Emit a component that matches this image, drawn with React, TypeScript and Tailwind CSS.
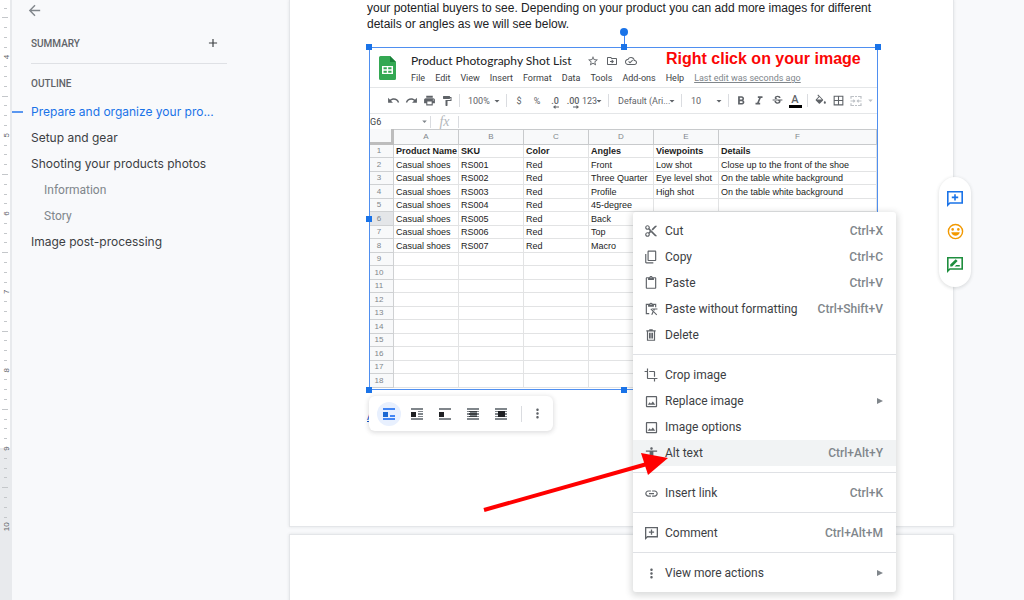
import type { ReactNode } from "react";
import {
  MdAccessibility,
  MdAdd,
  MdArrowBack,
  MdArrowDropDown,
  MdBorderAll,
  MdContentCopy,
  MdContentCut,
  MdCrop,
  MdFormatBold,
  MdFormatItalic,
  MdFormatPaint,
  MdLink,
  MdMoreVert,
  MdOutlineCloudDone,
  MdOutlineContentPaste,
  MdOutlineDriveFileMove,
  MdOutlineImage,
  MdPrint,
  MdRedo,
  MdStarBorder,
  MdStrikethroughS,
  MdUndo,
} from "react-icons/md";

const INCH = 78.3;

const Ruler = () => {
  const ticks = Array.from({ length: 55 }, (_, i) => i - 6);
  return (
    <div className="w-3 shrink-0 border-r-2 border-[#e8eaed] bg-white">
      <svg width="10" height="600" className="block">
        <rect x="0" y="448" width="10" height="152" fill="#e8eaed" />
        {ticks.map((i) => {
          const y = 57 + (i * INCH) / 8;
          if (i % 8 === 0) {
            return (
              <text
                key={i}
                transform={`translate(9 ${y}) rotate(-90)`}
                textAnchor="middle"
                fontSize="8"
                fill="#5f6368"
                className="font-['Liberation_Sans',sans-serif]"
              >
                {4 + i / 8}
              </text>
            );
          }
          const half = Math.abs(i % 8) === 4;
          return (
            <rect
              key={i}
              x={half ? 2 : 4}
              y={Math.round(y - 0.5)}
              width={half ? 6 : 3}
              height="1"
              fill="#c4c7ca"
            />
          );
        })}
      </svg>
    </div>
  );
};

const outline = [
  { text: "Prepare and organize your pro...", active: true },
  { text: "Setup and gear" },
  { text: "Shooting your products photos" },
  { text: "Information", sub: true },
  { text: "Story", sub: true },
  { text: "Image post-processing" },
];

const Sidebar = () => (
  <nav className="w-[277px] shrink-0">
    <button aria-label="Close outline" className="ml-[14px] mt-[2px] block text-[#80868b]">
      <MdArrowBack size={17} />
    </button>
    <div className="ml-[19px] mr-[62px]">
      <div className="mt-[14px] flex h-5 items-center justify-between">
        <h2 className="text-[10px] font-medium text-[#5f6368]">SUMMARY</h2>
        <button aria-label="Add summary" className="mr-[7px] text-[#3c4043]">
          <MdAdd size={14} />
        </button>
      </div>
      <hr className="mt-[10px] border-[#dfe1e5]" />
      <h2 className="mt-[12px] text-[10px] font-medium leading-4 text-[#5f6368]">
        OUTLINE
      </h2>
    </div>
    <ul className="mt-[7px]">
      {outline.map((item) => (
        <li key={item.text} className="flex h-[26px] items-center">
          <span
            className={
              item.active ? "mr-2 h-[2px] w-[11px] bg-[#5a97f0]" : "mr-2 w-[11px]"
            }
          />
          <a
            href="#"
            className={
              item.active
                ? "font-[Inter,sans-serif] text-[12px] text-[#1a73e8]"
                : item.sub
                  ? "pl-[13px] text-[12px] text-[#80868b]"
                  : "font-[Inter,sans-serif] text-[12px] text-[#3c4043]"
            }
          >
            {item.text}
          </a>
        </li>
      ))}
    </ul>
  </nav>
);

/* ---- Sheet inside the document ---- */

const SheetsLogo = () => (
  <svg width="17" height="24" viewBox="0 0 17 24">
    <path d="M1.500 0H11l6 6v16.500a1.500 1.500 0 0 1-1.500 1.500h-14A1.500 1.500 0 0 1 0 22.500v-21A1.500 1.500 0 0 1 1.500 0z" fill="#34a853" />
    <path d="M11 0l6 6h-6z" fill="#188038" />
    <path d="M3 10h11v8H3zM4.500 11.200v2.100h3.300v-2.100zm4.700 0v2.100h3.300v-2.100zM4.500 14.700v2.100h3.300v-2.100zm4.700 0v2.100h3.300v-2.100z" fill="#fff" fillRule="evenodd" />
  </svg>
);

const FillIcon = () => (
  <svg width="13" height="13" viewBox="0 0 24 24" fill="#5f6368">
    <path d="M16.560 9.940L7.620 1 6.210 2.410l2.380 2.380-5.150 5.150a1.490 1.490 0 0 0 0 2.120l5.500 5.500c.290.290.680.440 1.060.440s.770-.150 1.060-.440l5.500-5.500c.590-.580.590-1.530 0-2.120zM5.500 10L10 5.500l4.500 4.500zM20 12.500s-2 2.200-2 3.500a2 2 0 0 0 4 0c0-1.300-2-3.500-2-3.500z" />
  </svg>
);

const MergeIcon = () => (
  <svg width="12" height="12" viewBox="0 0 12 12" fill="none" stroke="#bdc1c6" strokeWidth="1.200">
    <path d="M4 1.500H1v2.200M4 10.500H1V8.300M8 1.500h3v2.200M8 10.500h3V8.300M5 1.500h2M5 10.500h2M0.500 6h4M11.500 6h-4" />
    <path d="M3.300 4.800L4.600 6 3.300 7.200M8.700 4.800L7.400 6l1.300 1.200" />
  </svg>
);

const Sep = () => <span className="mx-[3px] h-[13px] w-px shrink-0 bg-[#dadce0]" />;

const Tool = ({ label, children }: { label: string; children: ReactNode }) => (
  <button
    aria-label={label}
    className="flex w-[18px] shrink-0 items-center justify-center text-[9px] text-[#5f6368]"
  >
    {children}
  </button>
);

const Picker = ({ label, value, box }: { label: string; value: string; box: string }) => (
  <label className={`relative flex shrink-0 items-center ${box}`}>
    <select
      aria-label={label}
      className="w-full appearance-none bg-transparent text-[9px] text-[#5f6368] outline-none"
    >
      <option>{value}</option>
    </select>
    <MdArrowDropDown size={12} className="pointer-events-none absolute right-0 text-[#5f6368]" />
  </label>
);

const DecimalIcon = ({ text, right }: { text: string; right?: boolean }) => (
  <span className="relative text-[9px] font-medium leading-3">
    {text}
    <svg width="6" height="4" viewBox="0 0 6 4" fill="#5f6368" className="absolute -bottom-[2px] right-0">
      {right ? <path d="M0 1.500h3.500V0L6 2 3.500 4V2.500H0z" /> : <path d="M6 1.500H2.500V0L0 2l2.500 2V2.500H6z" />}
    </svg>
  </span>
);

const menus = ["File", "Edit", "View", "Insert", "Format", "Data", "Tools", "Add-ons", "Help"];

const rows = [
  ["Product Name", "SKU", "Color", "Angles", "Viewpoints", "Details"],
  ["Casual shoes", "RS001", "Red", "Front", "Low shot", "Close up to the front of the shoe"],
  ["Casual shoes", "RS002", "Red", "Three Quarter", "Eye level shot", "On the table white background"],
  ["Casual shoes", "RS003", "Red", "Profile", "High shot", "On the table white background"],
  ["Casual shoes", "RS004", "Red", "45-degree", "", ""],
  ["Casual shoes", "RS005", "Red", "Back", "", ""],
  ["Casual shoes", "RS006", "Red", "Top", "", ""],
  ["Casual shoes", "RS007", "Red", "Macro", "", ""],
  ...Array.from({ length: 10 }, () => ["", "", "", "", "", ""]),
];

const Sheet = () => (
  <div className="h-[341px] overflow-hidden bg-white">
    <div className="flex h-10 items-start border-b border-[#e4e6e8] pl-[9px]">
      <div className="mt-2 w-8 shrink-0">
        <SheetsLogo />
      </div>
      <div className="min-w-0 flex-1">
        <div className="flex h-[22px] items-center pt-1 text-[#5f6368]">
          <h3 className="w-[176px] whitespace-nowrap font-[Lato,sans-serif] text-[12px] text-[#202124]">
            Product Photography Shot List
          </h3>
          <MdStarBorder size={12} />
          <MdOutlineDriveFileMove size={12} className="ml-[7px]" />
          <MdOutlineCloudDone size={12} className="ml-[7px]" />
          <strong className="ml-[29px] whitespace-nowrap pb-1 font-['Liberation_Sans',sans-serif] text-[16px] leading-4 text-[#fb0606]">
            Right click on your image
          </strong>
        </div>
        <div className="flex h-4 items-center gap-[10px] whitespace-nowrap text-[9px] text-[#3c4043]">
          {menus.map((m) => (
            <button key={m}>{m}</button>
          ))}
          <a href="#" className="text-[#80868b] underline">
            Last edit was seconds ago
          </a>
        </div>
      </div>
    </div>

    <div className="flex h-[26px] items-center border-b border-[#e4e6e8] pl-[14px]">
      <Tool label="Undo"><MdUndo size={13} /></Tool>
      <Tool label="Redo"><MdRedo size={13} /></Tool>
      <Tool label="Print"><MdPrint size={13} /></Tool>
      <Tool label="Paint format"><MdFormatPaint size={12} /></Tool>
      <Sep />
      <Picker label="Zoom" value="100%" box="w-10 pl-[5px]" />
      <Sep />
      <Tool label="Currency">$</Tool>
      <Tool label="Percent">%</Tool>
      <Tool label="Decrease decimals"><DecimalIcon text=".0" /></Tool>
      <Tool label="Increase decimals"><DecimalIcon text=".00" right /></Tool>
      <Picker label="Number format" value="123" box="w-[23px]" />
      <Sep />
      <Picker label="Font" value="Default (Ari..." box="w-[66px] pl-[6px]" />
      <Sep />
      <Picker label="Font size" value="10" box="w-10 pl-[6px]" />
      <Sep />
      <Tool label="Bold"><MdFormatBold size={14} /></Tool>
      <Tool label="Italic"><MdFormatItalic size={14} /></Tool>
      <Tool label="Strikethrough"><MdStrikethroughS size={13} /></Tool>
      <Tool label="Text color">
        <span className="w-[13px] border-b-[3px] border-black text-[11px] font-medium leading-[11px]">A</span>
      </Tool>
      <Sep />
      <Tool label="Fill color"><FillIcon /></Tool>
      <Tool label="Borders"><MdBorderAll size={13} /></Tool>
      <Tool label="Merge cells"><MergeIcon /></Tool>
      <MdArrowDropDown size={11} className="shrink-0 text-[#bdc1c6]" />
    </div>

    <div className="flex h-[15px] items-center text-[9px] text-[#3c4043]">
      <input aria-label="Cell" defaultValue="G6" className="w-[49px] bg-transparent outline-none" />
      <MdArrowDropDown size={11} className="text-[#80868b]" />
      <span className="h-3 w-px bg-[#dadce0]" />
      <span className="w-[27px] text-center font-['Liberation_Serif',serif] text-[14px] italic leading-3 text-[#b3b7bb]">
        fx
      </span>
      <span className="h-3 w-px bg-[#dadce0]" />
      <input aria-label="Formula" className="min-w-0 flex-1 bg-transparent outline-none" />
    </div>

    <table className="w-full table-fixed border-separate border-spacing-0 font-['Liberation_Sans',sans-serif] text-[9px] leading-3">
      <colgroup>
        <col className="w-6" />
        <col className="w-[65px]" />
        <col className="w-[65px]" />
        <col className="w-[65px]" />
        <col className="w-[65px]" />
        <col className="w-[65px]" />
        <col />
      </colgroup>
      <thead>
        <tr className="h-4 bg-[#f8f9fa] text-[8px] text-[#80868b]">
          <th className="border-b-[3px] border-r-[3px] border-[#bdbdbd]" />
          {["A", "B", "C", "D", "E", "F"].map((c) => (
            <th key={c} className="border-b border-r border-t border-[#c8cacc] p-0 font-normal">
              {c}
            </th>
          ))}
        </tr>
      </thead>
      <tbody>
        {rows.map((row, i) => (
          <tr key={i} className={i === 0 ? "h-[13px] font-bold" : "odd:h-[13px] even:h-[14px]"}>
            <th
              className={`border-b border-r border-[#cfd1d3] p-0 pr-[5px] align-bottom text-[8px] font-normal text-[#80868b] ${
                i === 5 ? "bg-[#e4e6e9]" : "bg-[#f8f9fa]"
              }`}
            >
              {i + 1}
            </th>
            {row.map((cell, j) => (
              <td
                key={j}
                className="whitespace-nowrap border-b border-r border-[#e2e3e4] p-0 pl-[2px] align-bottom text-[#1c1c1c]"
              >
                {cell}
              </td>
            ))}
          </tr>
        ))}
      </tbody>
    </table>
  </div>
);

const handles = [
  "-left-1 -top-1",
  "left-1/2 -ml-[3px] -top-1",
  "-right-1 -top-1",
  "-left-1 top-1/2 -mt-[3px]",
  "-right-1 top-1/2 -mt-[3px]",
  "-left-1 -bottom-1",
  "left-1/2 -ml-[3px] -bottom-1",
  "-right-1 -bottom-1",
];

/* ---- Wrap toolbar under the image ---- */

const WrapIcon = ({ kind }: { kind: string }) => (
  <svg width="12" height="12" viewBox="0 0 12 12" className="block">
    <g fill={kind === "Inline" ? "#4285f4" : "#80868b"}>
      <path d="M0 0h12v2H0zM0 10h12v2H0z" />
      {kind === "Inline" && <path d="M7 7h5v2H7z" />}
      {kind === "Wrap text" && <path d="M7 3h5v1H7zM7 5h5v2H7zM7 8h5v1H7z" />}
      {(kind === "Behind text" || kind === "In front of text") && (
        <path d="M0 3h12v1H0zM0 5h12v2H0zM0 8h12v1H0z" />
      )}
    </g>
    {kind === "Behind text" ? (
      <>
        <path d="M3 3h7v6H3z" fill="#80868b" />
        <path d="M2 3h8v1H2zM2 5h8v2H2zM2 8h8v1H2z" fill="#3c4043" />
      </>
    ) : kind === "In front of text" ? (
      <path d="M3 3h7v6H3z" fill="#202124" />
    ) : (
      <path d="M0 4h5v5H0z" fill={kind === "Inline" ? "#1967d2" : "#202124"} />
    )}
  </svg>
);

const WrapToolbar = () => (
  <div className="absolute -left-px top-full mt-[7px] flex h-[35px] w-[184px] items-center rounded-md bg-white pl-2 shadow-[0_1px_4px_1px_rgba(60,64,67,0.16)]">
    {["Inline", "Wrap text", "Break text", "Behind text", "In front of text"].map((kind) => (
      <button
        key={kind}
        aria-label={kind}
        className={`mr-1 flex size-6 items-center justify-center rounded-full ${
          kind === "Inline" ? "bg-[#e8f0fe]" : ""
        }`}
      >
        <WrapIcon kind={kind} />
      </button>
    ))}
    <span className="ml-1 h-4 w-px bg-[#dadce0]" />
    <button aria-label="More options" className="ml-2 text-[#5f6368]">
      <MdMoreVert size={15} />
    </button>
  </div>
);

/* ---- Context menu ---- */

const CommentIcon = ({ size }: { size: number }) => (
  <svg width={size} height={size} viewBox="2 2 20 20" fill="currentColor">
    <path d="M2 2h20v16H6l-4 4zM4 4v13.200L5.200 16H20V4z" fillRule="evenodd" />
    <path d="M11 6h2v3h3v2h-3v3h-2v-3H8V9h3z" />
  </svg>
);

const SuggestIcon = () => (
  <svg width="16" height="16" viewBox="2 2 20 20" fill="currentColor">
    <path d="M2 2h20v16H6l-4 4zM4 4v13.200L5.200 16H20V4z" fillRule="evenodd" />
    <path d="M6 14v-2.500l6.900-6.800 2.400 2.400L8.500 14zM11.500 14l2-2H18v2z" />
  </svg>
);

const EmojiIcon = () => (
  <svg width="17" height="17" viewBox="0 0 24 24" fill="currentColor">
    <path d="M12 1a11 11 0 1 0 0 22 11 11 0 0 0 0-22zm0 20a9 9 0 1 1 0-18 9 9 0 0 1 0 18z" />
    <circle cx="8" cy="9" r="1.800" />
    <circle cx="16" cy="9" r="1.800" />
    <path d="M6 13h12c-.6 3-3.100 5-6 5s-5.400-2-6-5z" />
  </svg>
);

const PastePlainIcon = () => (
  <svg width="14" height="14" viewBox="0 0 24 24" fill="currentColor">
    <path d="M19 3h-4.200a3 3 0 0 0-5.600 0H3v18h6v-2H5V5h2v3h10V5h2v4h2V3zm-7 2a1 1 0 1 1 0-2 1 1 0 0 1 0 2z" />
    <path d="M13 11h10v2h-4.500l-1 2.300-1.600-1.600.3-.7H15z" />
    <path d="M11 12.400l1.300-1.300L22.500 21.300l-1.300 1.300-4.900-4.900L14.500 22h-2.200l2.500-5.800z" />
  </svg>
);

const TrashIcon = () => (
  <svg width="14" height="14" viewBox="0 0 24 24" fill="currentColor">
    <path d="M9 2h6v2h5v2h-1v16H5V6H4V4h5zM7 6v14h10V6z" fillRule="evenodd" />
    <path d="M8.500 8h2v10h-2zM11 8h2v10h-2zM13.500 8h2v10h-2z" />
  </svg>
);

type Item = { icon: ReactNode; text: string; keys?: string; more?: boolean; hover?: boolean };

const groups: Item[][] = [
  [
    { icon: <MdContentCut size={14} />, text: "Cut", keys: "Ctrl+X" },
    { icon: <MdContentCopy size={14} className="-scale-x-100 rotate-180" />, text: "Copy", keys: "Ctrl+C" },
    { icon: <MdOutlineContentPaste size={14} />, text: "Paste", keys: "Ctrl+V" },
    { icon: <PastePlainIcon />, text: "Paste without formatting", keys: "Ctrl+Shift+V" },
    { icon: <TrashIcon />, text: "Delete" },
  ],
  [
    { icon: <MdCrop size={14} />, text: "Crop image" },
    { icon: <MdOutlineImage size={15} />, text: "Replace image", more: true },
    { icon: <MdOutlineImage size={15} />, text: "Image options" },
    { icon: <MdAccessibility size={15} />, text: "Alt text", keys: "Ctrl+Alt+Y", hover: true },
  ],
  [{ icon: <MdLink size={15} />, text: "Insert link", keys: "Ctrl+K" }],
  [{ icon: <CommentIcon size={13} />, text: "Comment", keys: "Ctrl+Alt+M" }],
  [{ icon: <MdMoreVert size={15} />, text: "View more actions", more: true }],
];

const ContextMenu = () => (
  <div
    role="menu"
    className="absolute left-[344px] top-[212px] w-[263px] rounded-[3px] bg-white py-[6px] shadow-[0_2px_6px_2px_rgba(60,64,67,0.18)]"
  >
    {groups.map((group, i) => (
      <div key={i} className={i > 0 ? "mt-[6px] border-t border-[#dfe1e5] pt-[7px]" : ""}>
        {group.map((item) => (
          <button
            key={item.text}
            role="menuitem"
            className={`flex h-[26px] w-full items-center pl-[10px] pr-[13px] text-[12px] text-[#3c4043] ${
              item.hover ? "bg-[#f1f3f4]" : ""
            }`}
          >
            <span className="mr-[6px] flex w-4 justify-center text-[#5f6368]">{item.icon}</span>
            {item.text}
            {item.keys && (
              <span className="ml-auto font-medium text-[#80868b]">{item.keys}</span>
            )}
            {item.more && (
              <svg width="6" height="6" viewBox="0 0 6 6" className="ml-auto" fill="#80868b">
                <path d="M0 0l6 3-6 3z" />
              </svg>
            )}
          </button>
        ))}
      </div>
    ))}
  </div>
);

const pageBox = "mr-[70px] border border-[#e4e6e9] bg-white shadow-[0_0_3px_rgba(60,64,67,0.12)]";

const App = () => (
  <div className="flex h-screen w-full overflow-hidden bg-[#f8f9fb] font-[Roboto,sans-serif]">
    <Ruler />
    <Sidebar />
    <main className="relative min-w-0 flex-1">
      <article className={`${pageBox} border-t-0 pb-[102px] pl-[77px] pr-[75px] font-['Liberation_Sans',sans-serif] text-[12px] leading-4 text-[#202124]`}>
        <p>
          your potential buyers to see. Depending on your product you can add more images for
          different details or angles as we will see below.
        </p>
        <figure className="relative ml-[2px] mt-[15px] border border-[#4f8ff0] font-[Roboto,sans-serif]">
          <Sheet />
          <span className="absolute -top-4 left-1/2 h-4 w-px bg-[#4285f4]" />
          <span className="absolute -top-5 left-1/2 -ml-1 size-2 rounded-full bg-[#1a73e8]" />
          {handles.map((h) => (
            <span key={h} className={`absolute size-[6px] bg-[#1a73e8] ${h}`} />
          ))}
          <WrapToolbar />
        </figure>
        <p className="pt-[18px]">
          <a href="#" className="text-[#1155cc] underline">A</a>
        </p>
      </article>
      <article className={`${pageBox} mt-[7px] h-40`} />

      <div className="absolute right-[53px] top-[177px] flex h-[110px] w-8 flex-col items-center justify-around rounded-full bg-white py-[6px] shadow-[0_1px_3px_1px_rgba(60,64,67,0.12)]">
        <button aria-label="Add comment" className="text-[#1a73e8]"><CommentIcon size={16} /></button>
        <button aria-label="Add emoji reaction" className="text-[#f29900]"><EmojiIcon /></button>
        <button aria-label="Suggest edits" className="text-[#1e8e3e]"><SuggestIcon /></button>
      </div>

      <ContextMenu />

      {/* Arrow to the Alt text entry */}
      <svg width="195" height="70" className="pointer-events-none absolute left-[190px] top-[448px]">
        <path d="M5 62L168 16" stroke="#f00" strokeWidth="4" />
        <path d="M162 5l27 5-20 17z" fill="#f00" />
      </svg>
    </main>
  </div>
);

export default App;
